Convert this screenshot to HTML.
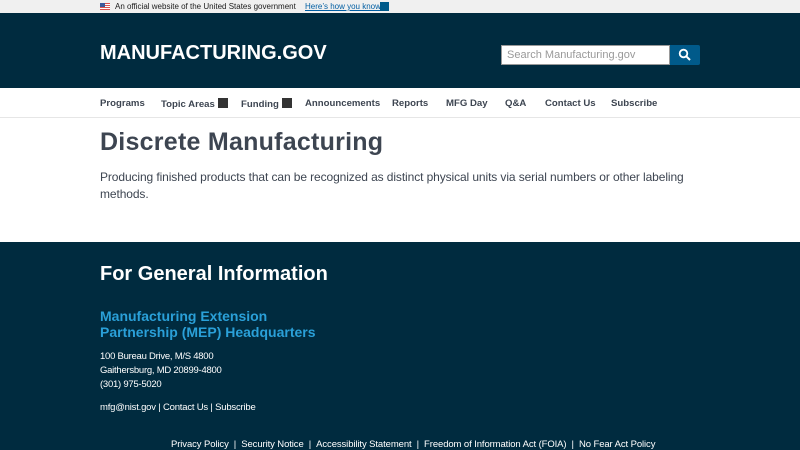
<!DOCTYPE html>
<html><head><meta charset="utf-8"><style>
*{margin:0;padding:0;box-sizing:border-box}
body{width:800px;height:450px;overflow:hidden;font-family:"Liberation Sans",sans-serif;background:#fff;position:relative}
.a{position:absolute;white-space:nowrap}
</style></head><body>
<div class="a" style="left:0;top:0;width:800px;height:13px;background:#f0f0f0"></div>
<div class="a" style="left:100px;top:3px;width:10px;height:7px;background:repeating-linear-gradient(#d9534f 0 1px,#fff 1px 2px)"><div style="width:5px;height:4px;background:#3b5a9a"></div></div>
<div class="a" style="left:115px;top:2px;font-size:8px;color:#1b1b1b">An official website of the United States government</div>
<div class="a" style="left:305px;top:2px;font-size:8px;color:#005ea2;text-decoration:underline">Here’s how you know</div>
<div class="a" style="left:380px;top:2px;width:9px;height:9px;background:#005a8a"></div>
<div class="a" style="left:0;top:13px;width:800px;height:75px;background:#002b3f"></div>
<div class="a" style="left:100px;top:42px;font-size:20px;font-weight:bold;color:#fff">MANUFACTURING.GOV</div>
<div class="a" style="left:501px;top:45px;width:169px;height:20px;background:#fff;border:1px solid #999"></div>
<div class="a" style="left:507px;top:49px;font-size:11px;color:#999">Search Manufacturing.gov</div>
<div class="a" style="left:670px;top:45px;width:30px;height:20px;background:#005a8a;border-radius:0 2px 2px 0"></div>
<svg class="a" style="left:678px;top:48px" width="14" height="14" viewBox="0 0 14 14"><circle cx="5.5" cy="5.5" r="3.8" fill="none" stroke="#fff" stroke-width="1.8"/><line x1="8.3" y1="8.3" x2="12" y2="12" stroke="#fff" stroke-width="2"/></svg>
<div class="a" style="left:0;top:117px;width:800px;height:1px;background:#e6e6e6"></div>
<div style="position:absolute;top:98px;left:100px;font-size:9.6px;font-weight:bold;color:#3d4551;white-space:nowrap">
<span class="a" style="left:0">Programs</span>
<span class="a" style="left:61px">Topic Areas <span style="display:inline-block;width:10px;height:10px;background:#333;vertical-align:-1px"></span></span>
<span class="a" style="left:141px">Funding <span style="display:inline-block;width:10px;height:10px;background:#333;vertical-align:-1px"></span></span>
<span class="a" style="left:205px">Announcements</span>
<span class="a" style="left:292px">Reports</span>
<span class="a" style="left:346px">MFG Day</span>
<span class="a" style="left:405px">Q&amp;A</span>
<span class="a" style="left:445px">Contact Us</span>
<span class="a" style="left:511px">Subscribe</span>
</div>
<div class="a" style="left:100px;top:128px;font-size:25px;font-weight:bold;color:#3d4551;letter-spacing:0.25px">Discrete Manufacturing</div>
<div class="a" style="left:100px;top:169px;font-size:12px;line-height:17px;color:#3d4551;white-space:normal;width:600px;letter-spacing:-0.1px">Producing finished products that can be recognized as distinct physical units via serial numbers or other labeling methods.</div>
<div class="a" style="left:0;top:242px;width:800px;height:208px;background:#002b3f"></div>
<div class="a" style="left:100px;top:263px;font-size:20px;font-weight:bold;color:#fff">For General Information</div>
<div class="a" style="left:100px;top:308px;font-size:14px;font-weight:bold;line-height:16px;color:#2aa0d8">Manufacturing Extension<br>Partnership (MEP) Headquarters</div>
<div class="a" style="left:100px;top:350px;font-size:9.5px;line-height:14px;color:#fff;letter-spacing:-0.25px">100 Bureau Drive, M/S 4800<br>Gaithersburg, MD 20899-4800<br>(301) 975-5020</div>
<div class="a" style="left:100px;top:402px;font-size:9.5px;color:#fff;letter-spacing:-0.2px">mfg@nist.gov | Contact Us | Subscribe</div>
<div class="a" style="left:171px;top:439px;font-size:9.5px;color:#fff;letter-spacing:-0.1px">Privacy Policy &nbsp;| &nbsp;Security Notice &nbsp;| &nbsp;Accessibility Statement &nbsp;| &nbsp;Freedom of Information Act (FOIA) &nbsp;| &nbsp;No Fear Act Policy</div>
</body></html>
